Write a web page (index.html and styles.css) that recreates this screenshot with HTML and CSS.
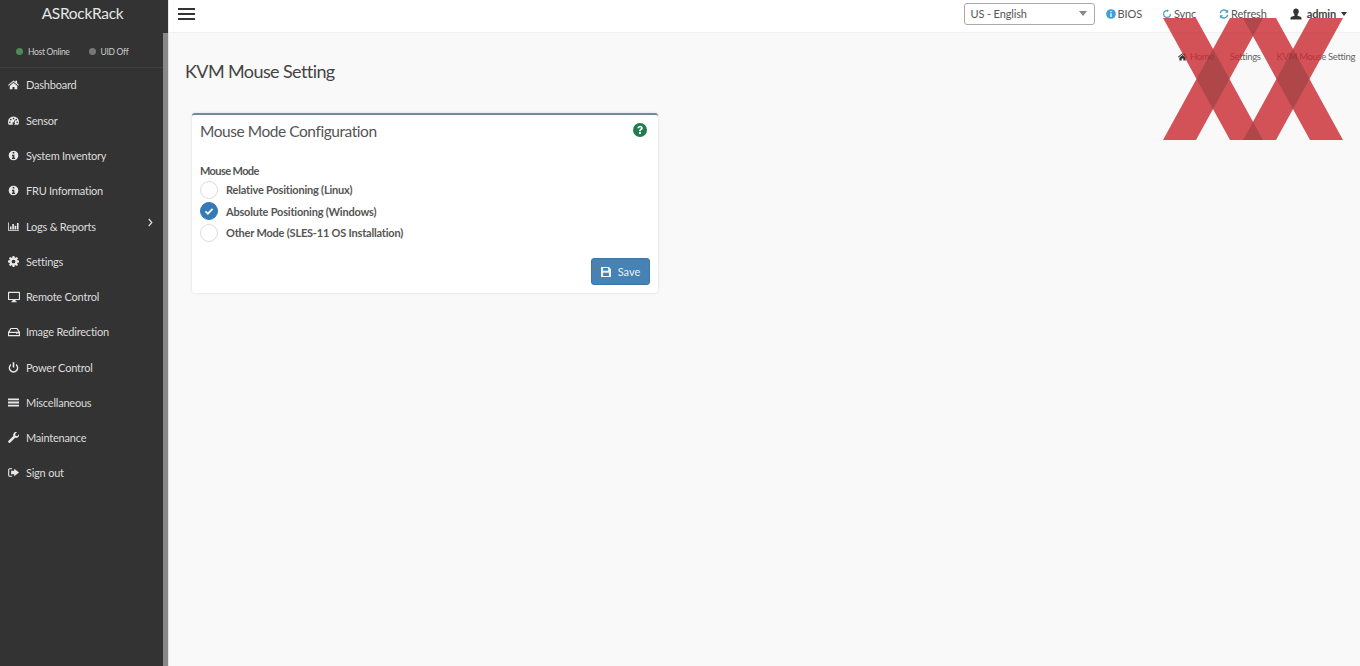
FILE: index.html
```html
<!DOCTYPE html>
<html lang="en">
<head>
<meta charset="utf-8">
<title>KVM Mouse Setting</title>
<link rel="stylesheet" href="styles.css">
</head>
<body>
<div class="app">
  <aside class="sidebar">
    <div class="brand">ASRockRack</div>
    <div class="scrollbar"></div>
    <div class="status">
      <span class="stat"><i class="dot green"></i>Host Online</span>
      <span class="stat"><i class="dot grey"></i>UID Off</span>
    </div>
    <nav class="nav">
      <a class="item"><svg class="ic" viewBox="0 0 16 16"><path d="M8 2 0 8.600l1 1.100L8 4l7 5.700 1-1.100-2.800-2.300V2.500h-2.400v1.800zM2.500 10v5h4v-3.500h3V15h4v-5L8 5.500z"/></svg>Dashboard</a>
      <a class="item"><svg class="ic" viewBox="0 0 16 16"><path fill-rule="evenodd" d="M8 2a8 8 0 0 0-8 8c0 1.500.4 2.800 1 4h14c.6-1.200 1-2.500 1-4a8 8 0 0 0-8-8zM4 5.500a1.200 1.200 0 1 1 0 2.400 1.200 1.200 0 0 1 0-2.400zm4-1.500a1.200 1.200 0 1 1 0 2.400A1.200 1.200 0 0 1 8 4zm4 1.500a1.200 1.200 0 1 1 0 2.400 1.200 1.200 0 0 1 0-2.400zM2.700 9.500a1.200 1.200 0 1 1 0 2.400 1.200 1.200 0 0 1 0-2.400zm10.600 0a1.200 1.200 0 1 1 0 2.400 1.200 1.200 0 0 1 0-2.400zM10 7l1 .4-1.600 3.500a1.700 1.700 0 1 1-1-.4z"/></svg>Sensor</a>
      <a class="item"><svg class="ic" viewBox="0 0 16 16"><path fill-rule="evenodd" d="M8 1a7 7 0 1 0 0 14A7 7 0 0 0 8 1zM6.800 3h2.400v2.200H6.800zM5.800 6.800h3.400v4.400h1.100v1.800H5.700v-1.800h1.100V8.600h-1z"/></svg>System Inventory</a>
      <a class="item"><svg class="ic" viewBox="0 0 16 16"><path fill-rule="evenodd" d="M8 1a7 7 0 1 0 0 14A7 7 0 0 0 8 1zM6.800 3h2.400v2.200H6.800zM5.800 6.800h3.400v4.400h1.100v1.800H5.700v-1.800h1.100V8.600h-1z"/></svg>FRU Information</a>
      <a class="item"><svg class="ic" viewBox="0 0 16 16"><path d="M0 2h1.200v11H16v1.200H0zM2.800 8h2.400v4.200H2.800zM6.200 4.500h2.400v7.700H6.200zM9.600 7h2.400v5.200H9.600zM13 3h2.400v9.200H13z"/></svg>Logs &amp; Reports<svg class="chev" viewBox="0 0 8 10"><path d="M2 1l3.500 4L2 9" fill="none" stroke="currentColor" stroke-width="1.400"/></svg></a>
      <a class="item"><svg class="ic" viewBox="0 0 16 16"><path fill-rule="evenodd" d="M6.700 0h2.600l.4 2.200 1.200.5 1.900-1.300 1.800 1.800-1.300 1.900.5 1.200 2.200.4v2.600l-2.200.4-.5 1.200 1.300 1.900-1.800 1.800-1.900-1.300-1.200.5-.4 2.200H6.700l-.4-2.200-1.200-.5-1.900 1.300-1.800-1.800 1.300-1.900-.5-1.200L0 9.300V6.700l2.200-.4.5-1.200-1.300-1.900 1.800-1.800 1.900 1.300 1.200-.5zM8 5.300a2.700 2.700 0 1 0 0 5.400 2.700 2.700 0 0 0 0-5.400z"/></svg>Settings</a>
      <a class="item"><svg class="ic wide" viewBox="0 0 16 16"><path fill-rule="evenodd" d="M.8 1h14.400a.8.8 0 0 1 .8.800v9.400a.8.800 0 0 1-.8.800H10v1.500h1.500V15h-7v-1.500H6V12H.8a.8.800 0 0 1-.8-.800V1.800A.8.800 0 0 1 .8 1zM1.500 2.500v8h13v-8z"/></svg>Remote Control</a>
      <a class="item"><svg class="ic wide" viewBox="0 0 16 16"><path fill-rule="evenodd" d="M3.500 2.500h9L16 8v5.500H0V8zM4.400 4 2.200 7.800h11.600L11.600 4zM1.500 9.300v2.700h13V9.300zM10.600 10a.7.700 0 1 0 1.400 0 .7.700 0 0 0-1.400 0zM12.600 10a.7.700 0 1 0 1.400 0 .7.700 0 0 0-1.400 0z"/></svg>Image Redirection</a>
      <a class="item"><svg class="ic" viewBox="0 0 16 16"><path d="M6.800 .5h2.400v7.500H6.800zM4.300 2.600v2.700a4.800 4.800 0 1 0 7.400 0V2.600a7 7 0 1 1-7.400 0z"/></svg>Power Control</a>
      <a class="item"><svg class="ic" viewBox="0 0 16 16"><path d="M0 2.200h16v2.600H0zM0 6.700h16v2.600H0zM0 11.200h16v2.600H0z"/></svg>Miscellaneous</a>
      <a class="item"><svg class="ic" viewBox="0 0 16 16"><path d="M16 4.200c0 2.500-2 4.500-4.500 4.500-.4 0-.8 0-1.200-.2l-6.800 6.800a1.800 1.800 0 0 1-2.700-2.600l6.900-6.800A4.500 4.500 0 0 1 13.200.1L10.400 3l.5 2.500 2.500.5 2.400-2.800c.1.300.2.600.2 1z"/></svg>Maintenance</a>
      <a class="item"><svg class="ic" viewBox="0 0 16 16"><path d="M6 2.500H2.500a1.500 1.500 0 0 0-1.500 1.500v8a1.500 1.500 0 0 0 1.500 1.500H6" fill="none" stroke="currentColor" stroke-width="1.600"/><path d="M9 2.500 16 8l-7 5.500v-3H4.500v-5H9z"/></svg>Sign out</a>
    </nav>
  </aside>
  <div class="main">
    <header class="topbar">
      <button class="burger" aria-label="Menu"><span></span><span></span><span></span></button>
      <div class="tools">
        <div class="select">US - English<i class="caret"></i></div>
        <a class="tool first"><svg class="tic" viewBox="0 0 12 12"><circle cx="6" cy="6" r="5.800" fill="#3c9fdf"/><path d="M5.200 2.300h1.600v1.500H5.200zM5.200 5h1.600v4.600H5.200z" fill="#fff"/></svg>BIOS</a>
        <a class="tool sync"><svg class="tic" viewBox="0 0 12 12"><path d="M6 2a4 4 0 1 0 4 4" fill="none" stroke="#46a3c8" stroke-width="1.500"/><path d="M6 .2v3.600L8.300 2z" fill="#46a3c8"/></svg>Sync</a>
        <a class="tool refresh"><svg class="tic" viewBox="0 0 12 12"><path d="M1.500 5A4.600 4.600 0 0 1 9.500 2.800M10.500 7A4.600 4.600 0 0 1 2.500 9.200" fill="none" stroke="#46a3c8" stroke-width="1.700"/><path d="M11 .5V4.500H7zM1 11.500V7.500H5z" fill="#46a3c8"/></svg>Refresh</a>
        <a class="tool user"><svg class="uic" viewBox="0 0 13 13"><path d="M6.500 .5c1.800 0 3 1.300 3 3.200 0 1.500-.7 2.700-1.300 3.300v1.400c1.500.6 4.300 1 4.300 2.600v1.500H.500V11c0-1.600 2.800-2 4.300-2.600V7c-.6-.6-1.300-1.800-1.300-3.300 0-1.900 1.200-3.200 3-3.200z"/></svg><b class="uname">admin</b><i class="ucaret"></i></a>
      </div>
    </header>
    <section class="head">
      <h1 class="title">KVM Mouse Setting</h1>
      <ol class="crumbs">
        <li><svg class="home" viewBox="0 0 16 16"><path d="M8 2 0 8.600l1 1.100L8 4l7 5.700 1-1.100-2.800-2.300V2.500h-2.400v1.800zM2.500 10v5h4v-3.500h3V15h4v-5L8 5.500z"/></svg>Home</li>
        <li>Settings</li>
        <li>KVM Mouse Setting</li>
      </ol>
    </section>
    <section class="card">
      <div class="card-head">
        <h2 class="card-title">Mouse Mode Configuration</h2>
        <svg class="help" viewBox="0 0 14 14"><circle cx="7" cy="7" r="7" fill="#1f7d4d"/><path d="M4.300 5.200C4.500 3.600 5.600 2.700 7.100 2.700c1.600 0 2.700 1 2.700 2.300 0 1-.5 1.600-1.300 2.100-.6.400-.7.600-.7 1.200H6c0-1.100.2-1.600 1-2.100.6-.4.900-.7.900-1.100 0-.5-.3-.8-.8-.8s-.9.300-1 1zM6 9.100h1.900v1.900H6z" fill="#fff"/></svg>
      </div>
      <div class="group-label">Mouse Mode</div>
      <label class="radio"><i class="circle"></i>Relative Positioning (Linux)</label>
      <label class="radio"><i class="circle on"><svg viewBox="0 0 18 18"><path d="M5 9.300 7.800 12 13 6.500" fill="none" stroke="#fff" stroke-width="2"/></svg></i>Absolute Positioning (Windows)</label>
      <label class="radio"><i class="circle"></i>Other Mode (SLES-11 OS Installation)</label>
      <div class="actions">
        <button class="save"><svg class="disk" viewBox="0 0 12 12"><path fill-rule="evenodd" d="M0 0h9.500L12 2.500V12H0zM2.500 1.200v3.300h6V1.200zM2.500 7v3.800h7V7z"/></svg>Save</button>
      </div>
    </section>
  </div>
</div>
<svg class="xx" viewBox="0 0 180 122" aria-hidden="true">
  <path class="band" d="M0 0H33L100 122H67Z M67 0H100L33 122H0Z M80 0H113L180 122H147Z M147 0H180L113 122H80Z"/>
  <path class="cross" d="M50 31 66.500 61 50 91 33.500 61Z M130 31 146.500 61 130 91 113.500 61Z M80 0H100L90 18Z M80 122H100L90 104Z"/>
</svg>
</body>
</html>
```
FILE: styles.css
```css
* { box-sizing: border-box; }
html, body { margin: 0; height: 100%; overflow: hidden; }
body { font-family: "Lato", "Noto Sans", sans-serif; color: #444; background: #f9f9f9; }
.app { display: flex; height: 666px; }
.sidebar { position: relative; width: 169px; flex: none; background: #333; color: #ddd; border-right: 1px solid #e4e4e4; }
.brand { height: 33px; display: flex; align-items: center; justify-content: center; font-size: 15.500px; letter-spacing: -.3px; color: #e6e6e6; padding-right: 3px; padding-bottom: 7px; }
.scrollbar { position: absolute; top: 33px; bottom: 0; right: 0; width: 5px; background: #888; }
.status { height: 35px; display: flex; align-items: center; gap: 19px; padding: 3px 0 0 16px; font-size: 8.500px; letter-spacing: -.3px; color: #ccc; border-bottom: 1px solid #3f3f3f; }
.stat { display: flex; align-items: center; gap: 5px; }
.dot { width: 7px; height: 7px; border-radius: 50%; }
.green { background: #4e8a52; }
.grey { background: #777; }
.nav { display: flex; flex-direction: column; margin-top: -.7px; }
.item { display: flex; align-items: center; height: 35.270px; padding-left: 8px; font-size: 11px; letter-spacing: -.22px; color: #ddd; position: relative; }
.ic { width: 11px; height: 11px; fill: #e8e8e8; color: #e8e8e8; margin-right: 7px; flex: none; }
.ic.wide { width: 12px; height: 12px; margin-right: 6px; }
.chev { width: 7px; height: 9px; position: absolute; left: 147px; top: 10px; }
.main { flex: 1; min-width: 0; display: flex; flex-direction: column; }
.topbar { height: 33px; background: #fff; border-bottom: 1px solid #f0f0f0; display: flex; align-items: center; justify-content: space-between; padding: 0 0 5px 9px; flex: none; }
.burger { display: flex; flex-direction: column; gap: 3px; width: 17px; padding: 0; border: 0; background: none; }
.burger span { height: 2px; background: #333; display: block; }
.tools { display: flex; align-items: center; font-size: 11px; letter-spacing: -.15px; color: #555; }
.select { width: 131px; height: 22px; border: 1px solid #aaa; border-radius: 3px; display: flex; align-items: center; justify-content: space-between; padding: 0 7px 0 6px; color: #555; background: #fff; }
.caret { border: 4px solid transparent; border-top: 5px solid #888; border-bottom: 0; }
.tool { display: flex; align-items: center; gap: 2px; color: #555; }
.first { margin-left: 11px; }
.sync { margin-left: 20px; }
.refresh { margin-left: 23px; }
.user { margin-left: 23px; margin-right: 13px; gap: 5px; }
.tic { width: 10px; height: 10px; }
.uic { width: 12px; height: 12px; fill: #333; }
.uname { font-weight: 700; color: #444; }
.ucaret { border: 3.500px solid transparent; border-top: 4px solid #333; border-bottom: 0; margin-left: 0; }
.head { display: flex; justify-content: space-between; padding: 26px 5px 0 16px; height: 80px; flex: none; }
.title { margin: 0; font-size: 18px; letter-spacing: -.6px; font-weight: 400; color: #444; line-height: 24px; }
.crumbs { list-style: none; margin: 0; padding: 0; display: flex; gap: 16px; font-size: 9.500px; letter-spacing: -.35px; color: #666; }
.crumbs li { display: flex; align-items: center; gap: 3px; height: 14px; margin-top: -10px; }
.home { width: 9px; height: 9px; fill: #333; }
.card { width: 466px; height: 180px; margin-left: 23px; background: #fff; border-top: 2px solid #6f8a9c; border-radius: 3px; box-shadow: 0 0 3px rgba(0,0,0,.12); padding: 0 8px; position: relative; }
.card-head { display: flex; justify-content: space-between; align-items: center; height: 31px; padding-right: 3px; }
.card-title { margin: 0; font-size: 15.500px; letter-spacing: -.45px; font-weight: 400; color: #555; }
.help { width: 14px; height: 14px; margin-bottom: 2px; }
.group-label { margin-top: 17px; font-size: 11px; letter-spacing: -.6px; font-weight: 700; color: #555; height: 16px; line-height: 16px; }
.radio { display: flex; align-items: center; font-size: 11px; letter-spacing: -.2px; font-weight: 700; color: #555; height: 21.500px; }
.circle { width: 18px; height: 18px; margin-right: 8px; border-radius: 50%; border: 1px solid #ddd; background: #fff; flex: none; }
.circle.on { background: #337ab7; border-color: #337ab7; }
.circle.on svg { display: block; width: 16px; height: 16px; }
.actions { position: absolute; right: 8px; bottom: 8px; }
.save { display: flex; align-items: center; gap: 7px; width: 59px; height: 27px; justify-content: center; background: #4682b4; border: 1px solid #3f76a3; border-radius: 3px; color: #eaf0f6; font: 11px "Lato", sans-serif; padding: 0; }
.disk { width: 10px; height: 10px; fill: #eaf0f6; }
.xx { position: absolute; left: 1163px; top: 18px; width: 180px; height: 122px; }
.band { fill: rgba(200,40,48,.8); }
.cross { fill: rgba(110,50,50,.35); }
```
